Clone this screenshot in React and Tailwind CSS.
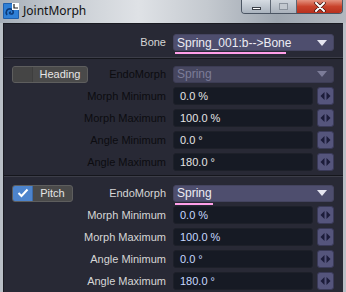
import React from "react";

const F = { fontFamily: '"Liberation Sans", "DejaVu Sans", sans-serif' };

function Arrows() {
  return (
    <div className="w-[17px] h-[18px] rounded-[3px] bg-[#55557c] border border-[#3a3a58] flex items-center justify-center">
      <svg width="11" height="10" viewBox="0 0 11 10">
        <polygon points="4.5,1 4.5,9 0.5,5" fill="#1c1c3a" />
        <polygon points="6.5,1 6.5,9 10.5,5" fill="#1c1c3a" />
      </svg>
    </div>
  );
}

function Dropdown({ text, disabled, underline }) {
  return (
    <div className="relative w-[161px]">
      <div
        className={`h-[17px] rounded-[3px] border flex items-center pl-[3px] pr-[6px] ${
          disabled ? "bg-[#46465f] border-[#3c3c54] text-[#7c7c98]" : "bg-[#4e4e6e] border-[#44445f] text-[#ececf4]"
        }`}
      >
        <span className="flex-1 text-[12px] leading-none">{text}</span>
        <svg width="10" height="6" viewBox="0 0 10 6">
          <polygon points="0,0 10,0 5,6" fill={disabled ? "#7c7c98" : "#e6e6f0"} />
        </svg>
      </div>
      {underline ? (
        <div className="absolute left-[2px] top-[18px] h-[2px] bg-[#ff9fe8]" style={{ width: underline }} />
      ) : null}
    </div>
  );
}

function ValueRow({ label, value, dim, blue }) {
  return (
    <div className="flex items-center h-[18px]">
      <div className={`w-[162px] text-right text-[11px] leading-none ${dim ? "text-[#0c0c10]" : "text-[#d6d6d6]"}`}>
        {label}
      </div>
      <div className="ml-[7px] flex items-center gap-[4px]">
        <div
          className={`w-[140px] h-[18px] rounded-[3px] bg-[#161a24] border border-[#1d2029] flex items-center pl-[6px] text-[11px] leading-none ${
            blue ? "text-[#c6d8ff]" : "text-[#e4e4e4]"
          }`}
        >
          {value}
        </div>
        <Arrows />
      </div>
    </div>
  );
}

function ToggleButton({ label, checked, width }) {
  return (
    <div
      className="h-[17px] rounded-[3px] border border-[#5e5e5e] bg-[#4a4a4a] flex items-stretch overflow-hidden"
      style={{ width }}
    >
      <div
        className={`w-[20px] flex items-center justify-center border-r ${
          checked ? "bg-[#4d84cc] border-[#3b6aa8]" : "bg-[#454545] border-[#3e3e3e]"
        }`}
      >
        {checked ? (
          <svg width="12" height="10" viewBox="0 0 12 10">
            <polyline points="1.5,5 4.5,8 10.5,1.5" fill="none" stroke="#ffffff" strokeWidth="2" />
          </svg>
        ) : null}
      </div>
      <div className="flex-1 flex items-center justify-center text-[11px] leading-none text-[#e6e6e6]">{label}</div>
    </div>
  );
}

function Section({ label, checked, btnWidth, dim }) {
  return (
    <div className="flex flex-col gap-[4px]">
      <div className="flex items-center h-[18px]">
        <div className="w-[162px] flex items-center">
          <div className="ml-[8px]">
            <ToggleButton label={label} checked={checked} width={btnWidth} />
          </div>
          <div className={`flex-1 text-right text-[11px] leading-none ${dim ? "text-[#0c0c10]" : "text-[#d6d6d6]"}`}>
            EndoMorph
          </div>
        </div>
        <div className="ml-[7px]">
          <Dropdown text="Spring" disabled={dim} underline={dim ? null : 38} />
        </div>
      </div>
      <ValueRow label="Morph Minimum" value="0.0 %" dim={dim} blue={!dim} />
      <ValueRow label="Morph Maximum" value="100.0 %" dim={dim} blue={!dim} />
      <ValueRow label="Angle Minimum" value="0.0 °" dim={dim} blue={!dim} />
      <ValueRow label="Angle Maximum" value="180.0 °" dim={dim} blue={!dim} />
    </div>
  );
}

export default function App() {
  return (
    <div className="w-[346px] h-[292px] overflow-hidden flex flex-col bg-[#b9bfc6]" style={F}>
      {/* Title bar */}
      <div className="h-[23px] flex items-start bg-[linear-gradient(to_right,#a6aeb8,#c9ced4_20%,#dfe2e6_40%,#c4c9cf_60%,#9ea6b0_80%,#b2b8bf)]">
        <div className="mt-[3px] ml-[3px] w-[16px] h-[16px]">
          <svg width="16" height="16" viewBox="0 0 16 16">
            <rect x="0" y="0" width="16" height="16" rx="1" fill="#1e5fae" />
            <rect x="1" y="1" width="14" height="14" fill="#2f7fd6" />
            <path d="M4 12 C2 9 4 5 8 6 C11 7 11 11 8 11 C6 11 6 9 8 9" fill="none" stroke="#0d3a78" strokeWidth="1.6" />
            <rect x="9" y="0" width="7" height="7" fill="#ffffff" />
            <path d="M11 1 V5 H15" fill="none" stroke="#1e1e1e" strokeWidth="1.2" />
          </svg>
        </div>
        <div
          className="ml-[4px] mt-[3px] text-[12px] leading-[16px] text-[#111]"
          style={{ fontFamily: '"Noto Sans", "Liberation Sans", sans-serif' }}
        >
          JointMorph
        </div>
        <div className="ml-auto mr-[3px] flex h-[14px] rounded-b-[4px] border border-t-0 border-[#4b5563] overflow-hidden">
          <div className="w-[29px] bg-[linear-gradient(#d6dce3,#aab3be)] border-r border-[#5d6673] flex items-center justify-center">
            <div className="mt-[4px] w-[9px] h-[3px] bg-white border border-[#3a3f47]" />
          </div>
          <div className="w-[26px] bg-[linear-gradient(#cfd5dc,#a9b1bb)] border-r border-[#5d6673] flex items-center justify-center">
            <div className="w-[9px] h-[7px] border border-[#8b939d] bg-[#c2c8cf]" />
          </div>
          <div className="w-[45px] bg-[linear-gradient(#e4927f,#c9432c_50%,#b8301d)] flex items-center justify-center">
            <svg width="12" height="10" viewBox="0 0 12 10">
              <path d="M2 1 L10 9 M10 1 L2 9" stroke="#3a1410" strokeWidth="3.4" strokeLinecap="round" />
              <path d="M2 1 L10 9 M10 1 L2 9" stroke="#ffffff" strokeWidth="2" strokeLinecap="round" />
            </svg>
          </div>
        </div>
      </div>

      {/* Content */}
      <div className="flex-1 mx-[3px] bg-[#282935] border-l border-t border-[#1a1b22] flex flex-col">
        <div className="flex items-center h-[17px] mt-[10px]">
          <div className="w-[162px] text-right text-[11px] leading-none text-[#d6d6d6]">Bone</div>
          <div className="ml-[7px]">
            <Dropdown text="Spring_001:b-->Bone" underline={111} />
          </div>
        </div>
        <div className="mt-[6px] h-[1px] bg-[#3c3d48]" />
        <div className="h-[1px] bg-[#15161c]" />
        <div className="mt-[6px]">
          <Section label="Heading" btnWidth={76} dim />
        </div>
        <div className="mt-[4px] h-[1px] bg-[#15161c]" />
        <div className="h-[1px] bg-[#3c3d48]" />
        <div className="mt-[7px]">
          <Section label="Pitch" checked btnWidth={61} />
        </div>
      </div>
    </div>
  );
}
